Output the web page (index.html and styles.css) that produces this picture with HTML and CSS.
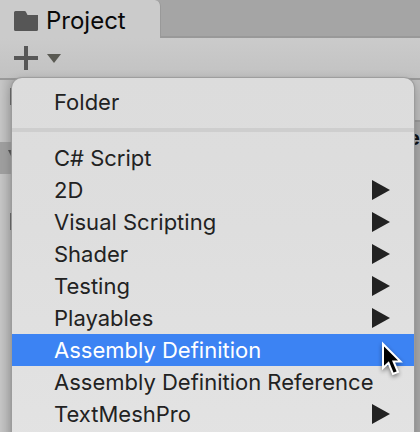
FILE: index.html
```html
<!DOCTYPE html>
<html lang="en">
<head>
<meta charset="utf-8">
<title>Project</title>
<link rel="stylesheet" href="styles.css">
</head>
<body>
<div class="window">
  <header class="tabs">
    <button class="tab" type="button">
      <svg class="folder" viewBox="0 0 24 20" aria-hidden="true"><path d="M0 1.5Q0 0 1.5 0H10.5Q12 0 12.5 2L13.5 4H24V18.500Q24 20 22.500 20H1.500Q0 20 0 18.500Z"/></svg>
      <span>Project</span>
    </button>
  </header>
  <div class="toolbar">
    <button class="add" type="button" aria-label="Create">
      <svg class="plus" viewBox="0 0 24 24" aria-hidden="true"><path d="M10 0h4v10h10v4H14v10h-4V14H0v-4h10z"/></svg>
      <svg class="caret" viewBox="0 0 14 9" aria-hidden="true"><path d="M0 0h14L7 9z"/></svg>
    </button>
  </div>
  <main class="content">
    <div class="tree">
      <div class="node"><span class="mark"></span></div>
      <div class="node selected"><svg class="fold" viewBox="0 0 14 14" aria-hidden="true"><path d="M0 0h14L7 14z"/></svg></div>
      <div class="node child"><span class="mark"></span></div>
    </div>
    <div class="files">
      <div class="filter"></div>
      <div class="path">es</div>
    </div>
  </main>
  <div class="menu" role="menu">
    <button class="item" role="menuitem">Folder</button>
    <hr class="rule">
    <button class="item" role="menuitem">C# Script</button>
    <button class="item" role="menuitem">2D<svg class="arrow" viewBox="0 0 18 20" aria-hidden="true"><path d="M0 0l18 10L0 20z"/></svg></button>
    <button class="item" role="menuitem">Visual Scripting<svg class="arrow" viewBox="0 0 18 20" aria-hidden="true"><path d="M0 0l18 10L0 20z"/></svg></button>
    <button class="item" role="menuitem">Shader<svg class="arrow" viewBox="0 0 18 20" aria-hidden="true"><path d="M0 0l18 10L0 20z"/></svg></button>
    <button class="item" role="menuitem">Testing<svg class="arrow" viewBox="0 0 18 20" aria-hidden="true"><path d="M0 0l18 10L0 20z"/></svg></button>
    <button class="item" role="menuitem">Playables<svg class="arrow" viewBox="0 0 18 20" aria-hidden="true"><path d="M0 0l18 10L0 20z"/></svg></button>
    <button class="item active" role="menuitem">Assembly Definition</button>
    <button class="item" role="menuitem">Assembly Definition Reference</button>
    <button class="item" role="menuitem">TextMeshPro<svg class="arrow" viewBox="0 0 18 20" aria-hidden="true"><path d="M0 0l18 10L0 20z"/></svg></button>
  </div>
  <svg class="cursor" viewBox="0 0 24 38" aria-hidden="true"><path d="M1 4V28L6.500 23L11 34L16 32L11.500 21.500H18.500Z"/></svg>
</div>
</body>
</html>
```
FILE: styles.css
```css
* { box-sizing: border-box; }

body {
  margin: 0;
  font-family: Inter, "Liberation Sans", sans-serif;
  font-size: 22px;
  line-height: 32px;
  color: #222;
}

button {
  margin: 0;
  padding: 0;
  border: 0;
  background: none;
  color: inherit;
  font: inherit;
  text-align: left;
}

svg { display: block; flex: none; }

.window {
  position: relative;
  display: flex;
  flex-direction: column;
  height: 100vh;
  overflow: hidden;
  background: #c8c8c8;
}

.tabs {
  display: flex;
  height: 38px;
  background: #a5a5a5;
  box-shadow: inset 0 -2px #999;
}

.tab {
  display: flex;
  align-items: center;
  gap: 8px;
  padding: 4px 34px 0 14px;
  border-right: 1px solid #999;
  border-radius: 0 6px 0 0;
  background: #cbcbcb;
  color: #090909;
  font-size: 24px;
}

.folder { width: 24px; height: 20px; fill: #565656; }

.toolbar {
  display: flex;
  height: 42px;
  padding: 0 14px;
  border-bottom: 2px solid #999;
  background: linear-gradient(#cbcbcb, #c2c2c2);
}

.add { display: flex; align-items: center; gap: 9px; }
.plus { width: 24px; height: 24px; fill: #575757; }
.caret { width: 14px; height: 9px; fill: #5a5a53; }

.content { display: flex; flex: 1; }

.tree {
  flex: 1;
  padding-top: 1px;
  background: linear-gradient(90deg, #c6c6c6, #b4b4b4 12px);
}

.node { height: 32px; padding: 7px 10px; }
.node.selected { margin-top: 29px; padding: 8px; background: #9f9f9f; }
.node.child { margin-top: 32px; }
.mark { display: block; width: 14px; height: 17px; background: #666; }
.fold { width: 14px; height: 14px; fill: #555; }

.files { width: 12px; background: #a8a8a8; }
.filter { height: 42px; border-bottom: 2px solid #999; background: #bdbdbd; }
.path { color: #111; font-size: 20px; font-weight: 700; }

.menu {
  position: absolute;
  top: 78px;
  right: 6px;
  bottom: -24px;
  left: 12px;
  padding: 8px 0;
  border-radius: 10px;
  background: linear-gradient(#dcdcdc, #dedede 40%, #e3e3e3);
  box-shadow: 0 0 1px 1px #9c9c9c, 0 4px 12px #0004;
}

.item {
  display: flex;
  align-items: center;
  justify-content: space-between;
  width: 100%;
  height: 32px;
  padding: 0 24px 0 42px;
  white-space: nowrap;
}

.item.active { background: #3c83f3; color: #fff; }
.arrow { width: 18px; height: 20px; fill: #222; }
.rule { height: 4px; margin: 10px 0; border: 0; background: #cecece; }

.cursor {
  position: absolute;
  top: 340px;
  right: 14px;
  width: 24px;
  height: 38px;
  overflow: visible;
  fill: #000;
  stroke: #fff;
  stroke-width: 2;
  filter: drop-shadow(0 2px 2px #0007);
}
```
